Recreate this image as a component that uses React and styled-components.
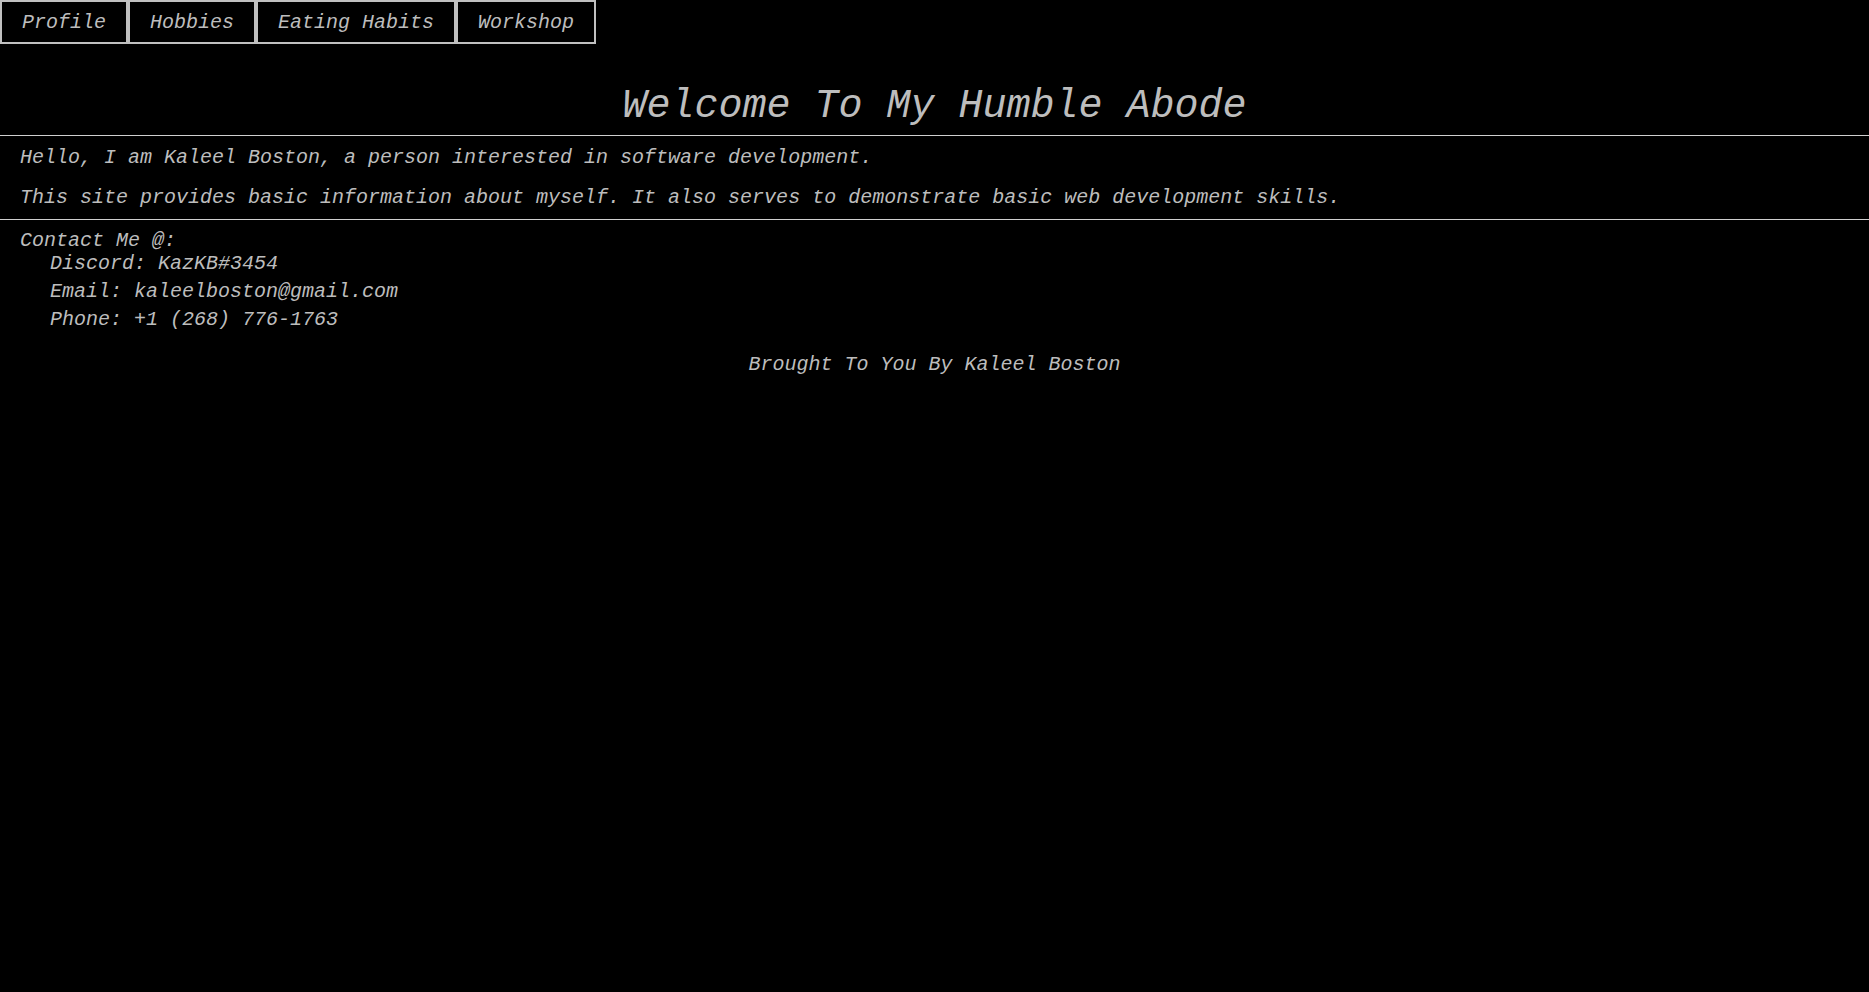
import React from 'react';
import styled, { createGlobalStyle } from 'styled-components';

const GlobalStyle = createGlobalStyle`
  html, body {
    margin: 0;
    padding: 0;
    background: #000;
  }
  body {
    min-height: 992px;
    font-family: "Liberation Mono", "Courier New", monospace;
    font-style: italic;
    font-size: 20px;
    color: #bdbdbd;
  }
`;

const links = ['Profile', 'Hobbies', 'Eating Habits', 'Workshop'];

export default function App() {
  return (
    <>
      <GlobalStyle />
      <Page>
        <Nav>
          {links.map(link => (
            <NavButton key={link}>{link}</NavButton>
          ))}
        </Nav>
        <Title>Welcome To My Humble Abode</Title>
        <Intro>
          <Text>Hello, I am Kaleel Boston, a person interested in software development.</Text>
          <Text>This site provides basic information about myself. It also serves to demonstrate basic web development skills.</Text>
        </Intro>
        <Contact>
          <Text>Contact Me @:</Text>
          <ContactList>
            <li>Discord: KazKB#3454</li>
            <li>Email: kaleelboston@gmail.com</li>
            <li>Phone: +1 (268) 776-1763</li>
          </ContactList>
        </Contact>
        <Footer>Brought To You By Kaleel Boston</Footer>
      </Page>
    </>
  );
}

const Page = styled.div`
  display: flex;
  flex-direction: column;
`;

const Nav = styled.nav`
  display: flex;
  align-items: flex-start;
`;

const NavButton = styled.a`
  display: block;
  border: 2px solid #c0c0c0;
  padding: 10px 20px 8px;
  line-height: 22px;
  font-size: 20px;
  color: #bdbdbd;
  cursor: pointer;
`;

const Title = styled.h1`
  margin: 40px 0 0;
  padding-bottom: 5px;
  font-size: 40px;
  line-height: 46px;
  font-weight: normal;
  text-align: center;
  border-bottom: 1px solid #cfcfcf;
`;

const Intro = styled.section`
  display: flex;
  flex-direction: column;
  gap: 17px;
  padding: 10px 20px 10px;
  border-bottom: 1px solid #cfcfcf;
`;

const Text = styled.p`
  margin: 0;
  line-height: 23px;
`;

const Contact = styled.section`
  padding: 9px 20px 0;
`;

const ContactList = styled.ul`
  list-style: none;
  margin: 0;
  padding: 0 0 0 30px;
  display: flex;
  flex-direction: column;
  gap: 5px;
  line-height: 23px;
`;

const Footer = styled.footer`
  margin-top: 22px;
  text-align: center;
  line-height: 23px;
`;
